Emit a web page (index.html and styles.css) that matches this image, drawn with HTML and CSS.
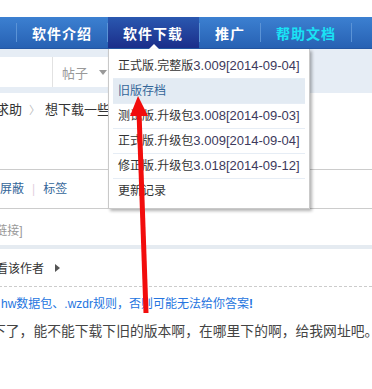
FILE: index.html
```html
<!DOCTYPE html>
<html lang="zh-CN">
<head>
  <meta charset="UTF-8" />
  <meta name="viewport" content="width=device-width, initial-scale=1.0" />
  <title>软件下载</title>
  <link rel="stylesheet" href="styles.css">
</head>
<body>
  <div class="topbar"></div>
  <nav class="nav">
    <span class="sep"></span>
    <a class="nav-item">软件介绍</a>
    <span class="sep"></span>
    <a class="nav-item active">软件下载</a>
    <span class="sep"></span>
    <a class="nav-item">推广</a>
    <span class="sep"></span>
    <a class="nav-item help">帮助文档</a>
    <span class="sep"></span>
  </nav>

  <div class="search">
    <div class="search-box">
      <span class="search-input"></span>
      <span class="search-type">帖子<i class="caret"></i></span>
    </div>
  </div>

  <div class="crumb">
    <a>求助</a><span class="crumb-sep">〉</span><a class="crumb-cur">想下载一些旧版本</a>
  </div>

  <div class="post-tools">
    <a>屏蔽</a><span class="pipe">|</span><a>标签</a>
  </div>
  <div class="post-link">[复制链接]</div>
  <div class="stripe"></div>
  <div class="post-author">只看该作者<i class="tri"></i></div>
  <div class="post-note">hw数据包、.wzdr规则，否则可能无法给你答案<b>!</b></div>
  <div class="post-body">下了，能不能下载下旧的版本啊，在哪里下的啊，给我网址吧。</div>

  <!-- 下拉菜单 -->
  <ul class="dropdown">
    <li>正式版.完整版<span class="ver">3.009[2014-09-04]</span></li>
    <li class="hover">旧版存档</li>
    <li>测试版.升级包<span class="ver">3.008[2014-09-03]</span></li>
    <li>正式版.升级包<span class="ver">3.009[2014-09-04]</span></li>
    <li>修正版.升级包<span class="ver">3.018[2014-09-12]</span></li>
    <li>更新记录</li>
  </ul>

  <svg class="arrow" viewBox="0 0 372 389" width="372" height="389">
    <line x1="139" y1="112" x2="146" y2="313" stroke="#f20d0d" stroke-width="5" />
    <polygon points="138,96 148,116 130,116" fill="#f20d0d" />
  </svg>
</body>
</html>
```

FILE: styles.css
```css
:root {
  --link: #336699;
  --line: #cccccc;
  --pale: #e6edf5;
}
body {
  margin: 0;
  width: 372px;
  height: 389px;
  overflow: hidden;
  position: relative;
  background: #fff;
  color: #333;
  font-family: "Liberation Sans", "Noto Sans CJK SC", sans-serif;
  font-size: 12px;
}
a { color: inherit; text-decoration: none; }

.topbar { height: 17px; }

.nav {
  display: flex;
  align-items: stretch;
  height: 32px;
  padding-left: 16px;
  background: linear-gradient(#3c80d1, #2761b3);
  border-bottom: 1px solid #2457a3;
  box-sizing: border-box;
}
.nav .sep {
  width: 1px;
  height: 19px;
  align-self: center;
  background: #5b93d6;
}
.nav-item {
  position: relative;
  display: flex;
  align-items: center;
  padding: 0 15px;
  color: #fff;
  font-size: 14px;
  font-weight: bold;
  letter-spacing: 1px;
}
.nav-item.active {
  background: linear-gradient(#2a58b0, #1b2e8a);
  padding-right: 16px;
}
.nav-item.active::after {
  content: "";
  position: absolute;
  left: 50%;
  bottom: -1px;
  margin-left: -5px;
  border: 5px solid transparent;
  border-bottom-color: #fff;
  border-top: 0;
}
.nav-item.help { color: #19e3f5; }

.search {
  height: 44px;
  padding-top: 8px;
  box-sizing: border-box;
  background: var(--pale);
}
.search-box {
  display: flex;
  width: 200px;
  height: 30px;
  background: #fff;
}
.search-input {
  width: 52px;
  border-right: 1px solid #e2e2e2;
}
.search-type {
  display: flex;
  align-items: center;
  padding-left: 9px;
  color: #999;
  font-size: 13px;
}
.caret {
  margin-left: 11px;
  border: 4px solid transparent;
  border-top: 5px solid #999;
  border-bottom: 0;
}

.crumb {
  height: 77px;
  margin-left: -4px;
  padding-top: 7px;
  box-sizing: border-box;
  border-bottom: 1px solid var(--line);
  font-size: 13px;
  line-height: 20px;
  white-space: nowrap;
}
.crumb-sep {
  margin: 0 5px 0 7px;
  color: #bbb;
  font-size: 11px;
}

.post-tools {
  height: 39px;
  line-height: 38px;
  border-bottom: 1px solid var(--line);
  box-sizing: border-box;
  color: var(--link);
}
.pipe {
  margin: 0 8px;
  color: #e3cfe0;
}
.post-link {
  height: 36px;
  margin-left: -32px;
  padding-top: 13px;
  box-sizing: border-box;
  line-height: 18px;
  color: #999;
}
.stripe {
  height: 4px;
  background: #e5ebf1;
}
.post-author {
  display: flex;
  align-items: center;
  height: 37px;
  margin-left: -16px;
  border-bottom: 1px dashed var(--line);
}
.tri {
  margin-left: 11px;
  border: 4px solid transparent;
  border-left: 5px solid #555;
  border-right: 0;
}
.post-note {
  padding: 8px 0 10px 1px;
  line-height: 18px;
  color: #2575e0;
  white-space: nowrap;
}
.post-body {
  margin-left: -8px;
  font-size: 13.8px;
  line-height: 18px;
  color: #444;
  white-space: nowrap;
}

.dropdown {
  position: absolute;
  top: 49px;
  left: 108px;
  width: 192px;
  margin: 0;
  padding: 5px 4px;
  list-style: none;
  background: #fff;
  border: 1px solid #c9c9c9;
  border-top: 0;
  box-shadow: 2px 2px 3px rgba(0, 0, 0, 0.3);
}
.dropdown li {
  height: 24px;
  line-height: 24px;
  padding-left: 5px;
  border-bottom: 1px solid var(--pale);
  white-space: nowrap;
}
.dropdown li:last-child { border-bottom: 0; }
.dropdown li.hover {
  background: #e3ebf3;
  color: var(--link);
}
.ver { font-size: 13px; color: #3d3a5c; }

.arrow {
  position: absolute;
  top: 0;
  left: 0;
  pointer-events: none;
}
```
